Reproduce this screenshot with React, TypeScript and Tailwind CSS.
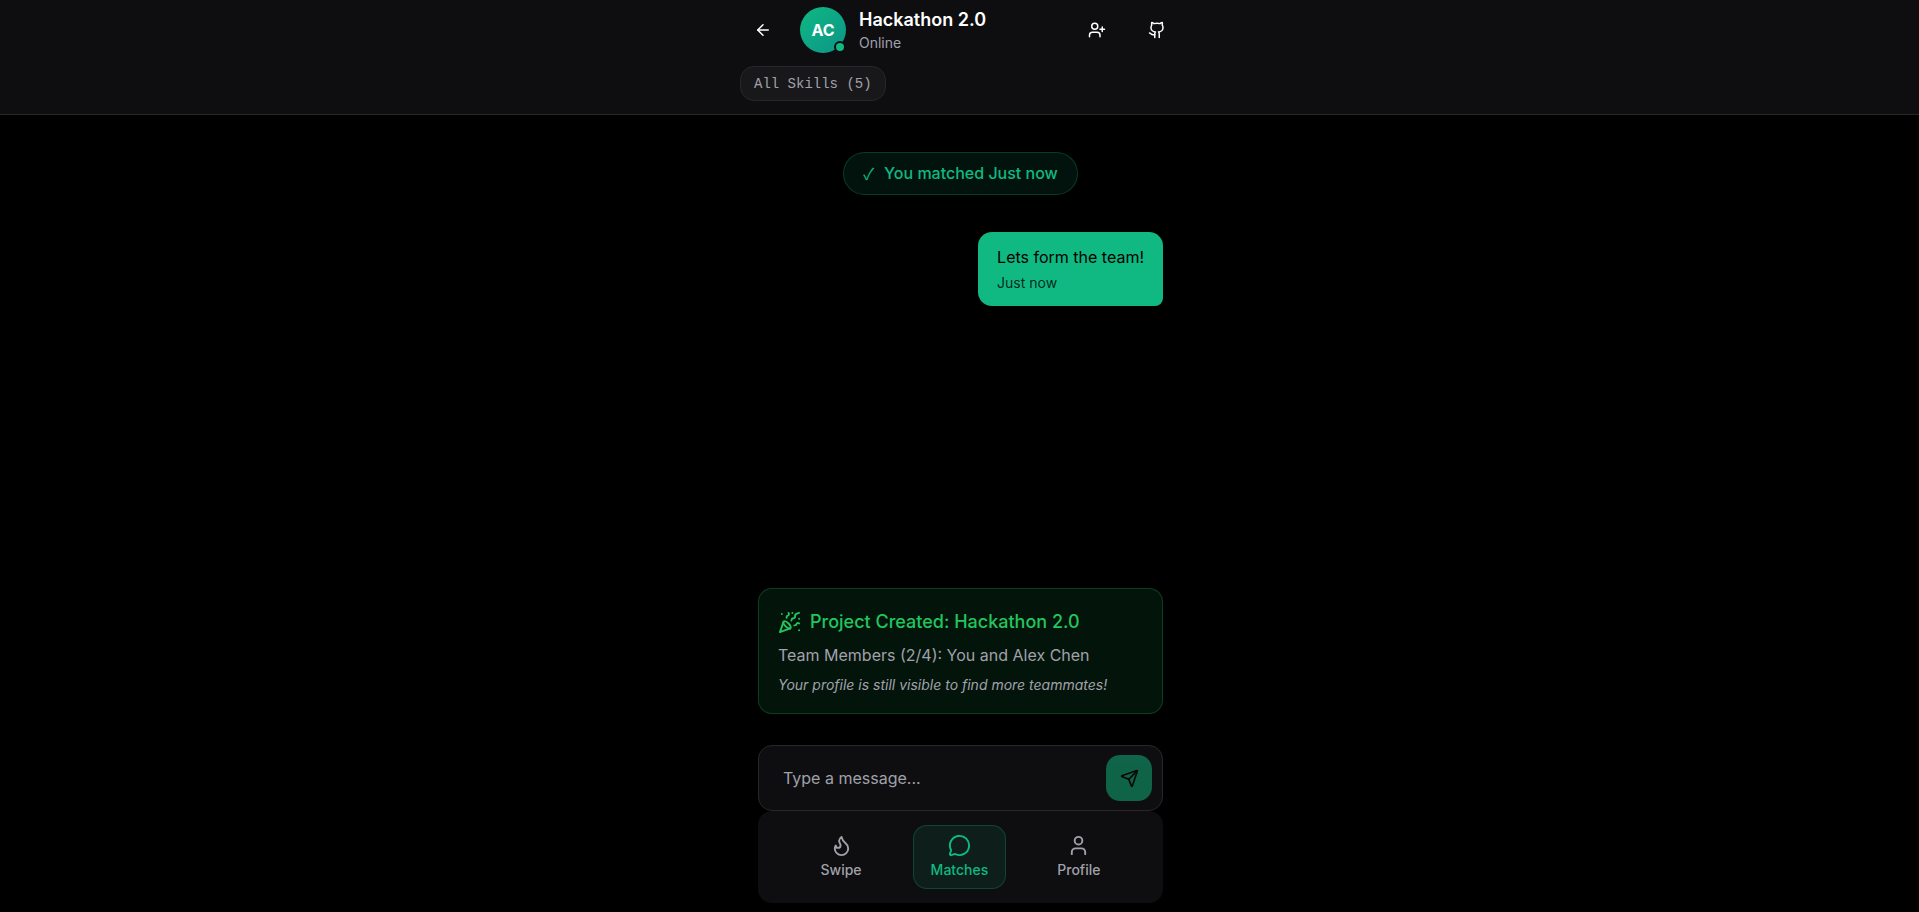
import { useState } from "react";
import { ArrowLeft, Flame, Github, MessageCircle, PartyPopper, Send, User, UserPlus } from "lucide-react";

const TABS = [
  { id: "swipe", label: "Swipe", icon: Flame },
  { id: "matches", label: "Matches", icon: MessageCircle },
  { id: "profile", label: "Profile", icon: User },
];

export default function App() {
  const [tab, setTab] = useState("matches");
  const [draft, setDraft] = useState("");
  const [messages, setMessages] = useState([{ text: "Lets form the team!", time: "Just now" }]);

  function handleSubmit(e: React.FormEvent) {
    e.preventDefault();
    const t = draft.trim();
    if (!t) return;
    setMessages((prev) => [...prev, { text: t, time: "Just now" }]);
    setDraft("");
  }

  return (
    <div className="flex h-screen flex-col bg-black font-[Inter,sans-serif] text-white">
      <header className="border-b border-[#27272a] bg-[#0e0e10] pt-[7px] pb-[13px]">
        <div className="mx-auto w-full max-w-[441px] pl-px">
          <div className="flex items-center">
            <button aria-label="Back" className="flex size-[46px] items-center justify-center">
              <ArrowLeft size={18} />
            </button>
            <div className="relative ml-[14px] flex size-[46px] items-center justify-center rounded-full bg-gradient-to-br from-[#10b981] to-[#0d9488]">
              <span className="text-base font-bold">AC</span>
              <span className="absolute right-0 bottom-0 size-3 rounded-full border-2 border-[#0e0e10] bg-[#10b981]" />
            </div>
            <div className="ml-[13px] flex-1">
              <h1 className="text-lg leading-[26px] font-semibold">Hackathon 2.0</h1>
              <p className="text-sm leading-5 text-[#a1a1aa]">Online</p>
            </div>
            <div className="flex gap-[14px]">
              <button aria-label="Invite teammate" className="flex size-[46px] items-center justify-center">
                <UserPlus size={18} />
              </button>
              <button aria-label="GitHub" className="flex size-[46px] items-center justify-center">
                <Github size={18} />
              </button>
            </div>
          </div>
          <button className="mt-[13px] flex h-[35px] items-center rounded-[14px] border border-[#27272a] bg-[#18181b] px-[13px] font-['Liberation_Mono',monospace] text-sm text-[#a1a1aa]">
            All Skills (5)
          </button>
        </div>
      </header>

      <main className="mx-auto flex min-h-0 w-full max-w-[441px] flex-1 flex-col pr-[17px] pb-[9px] pl-[19px]">
        {/* Conversation */}
        <div className="min-h-0 flex-1 overflow-y-auto pt-[37px]">
          <div className="mx-auto flex h-[43px] w-fit items-center gap-[10px] rounded-full border border-[#10b981]/25 bg-[#10b981]/10 px-[19px] pb-px leading-6 font-medium text-[#10b981]">
            <span className="font-['Noto_Sans_CJK_JP',sans-serif] font-normal">✓</span>
            <span>You matched Just now</span>
          </div>
          <div className="mt-[37px] flex flex-col items-end gap-4">
            {messages.map((m, i) => (
              <div key={i} className="rounded-[14px] rounded-br-lg bg-[#10b981] px-[19px] pt-3 pb-[10px] text-black">
                <p className="text-base leading-[26px]">{m.text}</p>
                <p className="text-sm leading-[26px] text-black/80">{m.time}</p>
              </div>
            ))}
          </div>
        </div>

        {/* Project banner */}
        <section className="rounded-[14px] border border-[#22c55e]/25 bg-[#22c55e]/10 px-[19px] pt-[19px] pb-[18px]">
          <h2 className="flex items-center gap-[9px] text-lg leading-7 font-medium text-[#22c55e]">
            <PartyPopper size={23} />
            Project Created: Hackathon 2.0
          </h2>
          <p className="mt-[7px] text-base leading-6 text-[#a1a1aa]">Team Members (2/4): You and Alex Chen</p>
          <p className="mt-2 text-sm leading-5 text-[#a1a1aa] italic">
            Your profile is still visible to find more teammates!
          </p>
        </section>

        {/* Composer */}
        <form
          onSubmit={handleSubmit}
          className="mt-[31px] flex h-[66px] items-center rounded-[14px] border border-[#27272a] bg-[#0e0e10] pr-[10px] pl-6"
        >
          <input
            aria-label="Message"
            value={draft}
            onChange={(e) => setDraft(e.target.value)}
            placeholder="Type a message..."
            className="min-w-0 flex-1 bg-transparent text-base text-white placeholder-[#a1a1aa] outline-none"
          />
          <button
            aria-label="Send"
            disabled={!draft.trim()}
            className="flex size-[46px] items-center justify-center rounded-[14px] bg-[#10b981] text-black disabled:opacity-50"
          >
            <Send size={19} />
          </button>
        </form>

        <nav className="flex h-[92px] items-center justify-around rounded-[14px] bg-[#0e0e10] px-7">
          {TABS.map(({ id, label, icon: Icon }) => (
            <button
              key={id}
              onClick={() => setTab(id)}
              className={`flex h-16 flex-col items-center justify-center gap-[3px] rounded-[14px] border px-[17px] text-sm leading-5 font-medium ${
                tab === id
                  ? "border-[#10b981]/25 bg-[#10b981]/10 text-[#10b981]"
                  : "border-transparent text-[#a1a1aa]"
              }`}
            >
              <Icon size={23} />
              {label}
            </button>
          ))}
        </nav>
      </main>
    </div>
  );
}
